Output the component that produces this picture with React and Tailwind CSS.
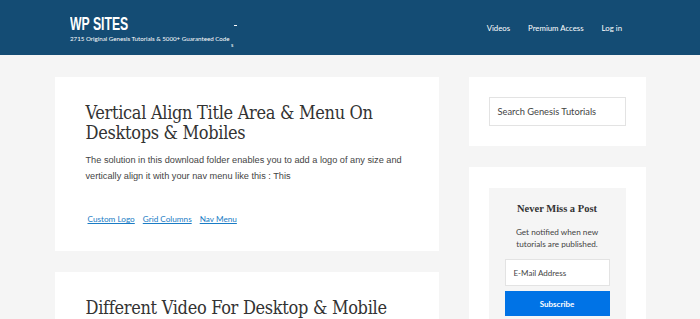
import React from 'react';

const lato = { fontFamily: 'Lato, "Open Sans", sans-serif' };
const slab = { fontFamily: '"DejaVu Serif Condensed", "DejaVu Serif", serif' };

function Header() {
  return (
    <header className="bg-[#144c74] h-[55px]">
      <div className="w-[560px] mx-auto flex items-start justify-between h-full">
        <div className="relative pt-[15px]">
          <div className="text-white text-[18px] leading-[18px] font-bold scale-x-[0.68] origin-left whitespace-nowrap" style={{ fontFamily: '"Liberation Sans", Arial, sans-serif' }}>
            WP SITES
          </div>
          <div className="text-white text-[6.2px] leading-[10px] mt-[1px] whitespace-nowrap" style={lato}>
            2715 Original Genesis Tutorials &amp; 5000+ Guaranteed Code
          </div>
          <span className="absolute left-[164px] top-[25px] w-[3px] h-[1px] bg-white" />
          <span className="absolute left-[161px] top-[43px] text-white text-[5px] leading-[5px]">s</span>
        </div>
        <nav className="flex items-center gap-[18px] pr-[8px] pt-[23px] text-[7.8px] text-white" style={lato}>
          <a>Videos</a>
          <a>Premium Access</a>
          <a>Log in</a>
        </nav>
      </div>
    </header>
  );
}

function Post({ title, lines, tags }) {
  return (
    <article className="bg-white pl-[31px] pr-[20px] pt-[26px] pb-[26px]">
      <h2 className="text-[18px] leading-[20px] tracking-[-0.3px] text-[#333]" style={slab}>
        {title}
      </h2>
      {lines && (
        <p className="mt-[9px] text-[9.2px] leading-[16px] text-[#444]" style={{ fontFamily: '"Liberation Sans", Arial, sans-serif' }}>
          {lines.map((l) => (
            <span key={l} className="block whitespace-nowrap">{l}</span>
          ))}
        </p>
      )}
      {tags && (
        <div className="mt-[29px] flex gap-[8px] pl-[2px] text-[8.2px] leading-[12px] text-[#1a7cc5]" style={lato}>
          {tags.map((t) => (
            <a key={t} className="underline">{t}</a>
          ))}
        </div>
      )}
    </article>
  );
}

export default function App() {
  return (
    <div className="min-h-screen bg-[#f5f5f5]">
      <Header />
      <div className="w-[591px] mx-auto mt-[22px] flex gap-[30px]">
        <main className="w-[384px] flex flex-col gap-[21px]">
          <Post
            title="Vertical Align Title Area & Menu On Desktops & Mobiles"
            lines={[
              'The solution in this download folder enables you to add a logo of any size and',
              'vertically align it with your nav menu like this : This',
            ]}
            tags={['Custom Logo', 'Grid Columns', 'Nav Menu']}
          />
          <Post title="Different Video For Desktop & Mobile" />
        </main>
        <aside className="w-[177px] flex flex-col gap-[21px]">
          <div className="bg-white px-[20px] py-[20px]">
            <div className="h-[29px] border border-[#e3e3e3] flex items-center px-[8px] text-[9.3px] text-[#444]" style={lato}>
              Search Genesis Tutorials
            </div>
          </div>
          <div className="bg-white px-[20px] pt-[21px]">
            <div className="bg-[#f5f5f5] px-[16px] pt-[14px] pb-[16px] text-center">
              <h4 className="text-[10.5px] leading-[14px] font-bold text-[#333]" style={{ fontFamily: '"Liberation Serif", "Times New Roman", serif' }}>Never Miss a Post</h4>
              <p className="mt-[10px] text-[8.2px] leading-[12px] text-[#444]" style={lato}>
                Get notified when new<br />tutorials are published.
              </p>
              <div className="mt-[9px] h-[27px] bg-white border border-[#e3e3e3] flex items-center px-[8px] text-[8px] text-[#444] text-left" style={lato}>
                E-Mail Address
              </div>
              <button className="mt-[5px] w-full h-[25px] bg-[#0073e6] text-white text-[8px] font-bold" style={lato}>
                Subscribe
              </button>
            </div>
          </div>
        </aside>
      </div>
    </div>
  );
}
